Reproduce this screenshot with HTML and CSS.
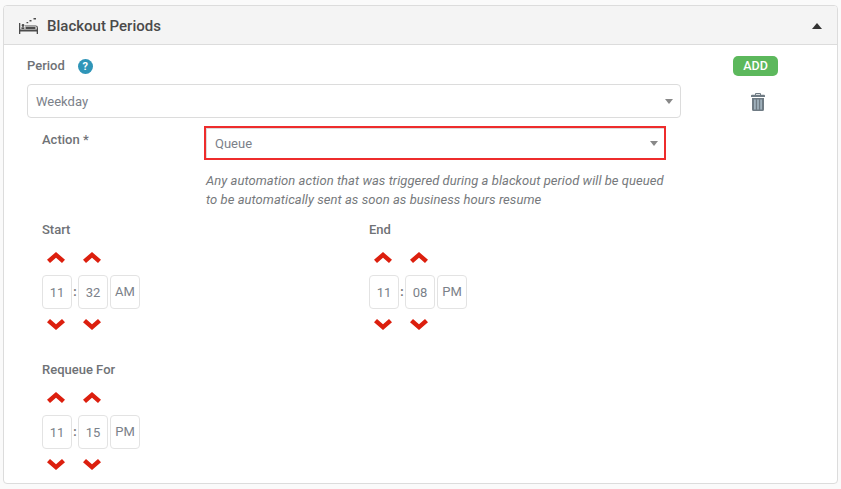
FILE: index.html
```html
<!DOCTYPE html>
<html lang="en">
<head>
<meta charset="utf-8">
<title>Blackout Periods</title>
<link rel="stylesheet" href="styles.css">
</head>
<body>
<svg class="defs" width="0" height="0" aria-hidden="true">
  <symbol id="up" viewBox="0 0 18 11"><path d="M0 7.800 9 0l9 7.800L15 11 9 5.800 3 11z"/></symbol>
  <symbol id="down" viewBox="0 0 18 11"><path d="M0 3.200 9 11l9-7.800L15 0 9 5.200 3 0z"/></symbol>
</svg>
<section class="panel">
  <header class="panel-head">
    <svg class="bed" viewBox="0 0 19 16" width="19" height="16"><path d="M0 5h1.300v6.500h16.400V9.500a1.300 1.300 0 0 0-1.300-1.300H6V7.500h10.600A2.400 2.400 0 0 1 19 9.900V16h-1.300v-2.500H1.300V16H0z"/><path d="M2.400 11V9.300h3V11zM6.500 11V8.800h10V11zM2.600 7.500a1.400 1.400 0 1 1 2.800 0 1.400 1.400 0 0 1-2.800 0z"/><path d="M7.500 4h1.700v1.300H7.500zM10.500 2h2v1.500h-2zM14.500 0H17v1.500h-2.500z"/></svg>
    <h2 class="panel-title">Blackout Periods</h2>
    <span class="caret-up"></span>
  </header>
  <div class="panel-body">
    <div class="period-row">
      <div class="period-main">
        <div class="label-row">
          <span class="label">Period</span>
          <span class="help">?</span>
        </div>
        <div class="select period-select"><span>Weekday</span><i class="caret"></i></div>
      </div>
      <div class="actions">
        <button class="add">ADD</button>
        <svg class="trash" viewBox="0 0 14 18" width="14" height="18"><path class="trash-body" fill-rule="evenodd" d="M5 0h4a1 1 0 0 1 1 1v.7h3a1 1 0 0 1 1 1V4H0V2.700a1 1 0 0 1 1-1h3V1a1 1 0 0 1 1-1zM5 1v.7h4V1zM1 5h12v11.500a1.500 1.500 0 0 1-1.500 1.500h-9A1.500 1.500 0 0 1 1 16.500z"/><path class="trash-bars" d="M3 6.500h1.800v10H3zM6.100 6.500h1.800v10H6.100zM9.200 6.500H11v10H9.200z"/></svg>
      </div>
    </div>
    <div class="action-row">
      <span class="label action-label">Action *</span>
      <div class="action-field">
        <div class="select queue-select"><span>Queue</span><i class="caret"></i></div>
        <p class="hint">Any automation action that was triggered during a blackout period will be queued<br>to be automatically sent as soon as business hours resume</p>
      </div>
    </div>
    <div class="times">
      <div class="time">
        <div class="label">Start</div>
        <div class="arrows"><svg class="chev"><use href="#up"/></svg><svg class="chev"><use href="#up"/></svg></div>
        <div class="fields"><span class="box">11</span><span class="colon">:</span><span class="box">32</span><span class="box ampm">AM</span></div>
        <div class="arrows lower"><svg class="chev"><use href="#down"/></svg><svg class="chev"><use href="#down"/></svg></div>
      </div>
      <div class="time">
        <div class="label">End</div>
        <div class="arrows"><svg class="chev"><use href="#up"/></svg><svg class="chev"><use href="#up"/></svg></div>
        <div class="fields"><span class="box">11</span><span class="colon">:</span><span class="box">08</span><span class="box ampm">PM</span></div>
        <div class="arrows lower"><svg class="chev"><use href="#down"/></svg><svg class="chev"><use href="#down"/></svg></div>
      </div>
      <div class="time">
        <div class="label">Requeue For</div>
        <div class="arrows"><svg class="chev"><use href="#up"/></svg><svg class="chev"><use href="#up"/></svg></div>
        <div class="fields"><span class="box">11</span><span class="colon">:</span><span class="box">15</span><span class="box ampm">PM</span></div>
        <div class="arrows lower"><svg class="chev"><use href="#down"/></svg><svg class="chev"><use href="#down"/></svg></div>
      </div>
    </div>
  </div>
</section>
</body>
</html>
```

FILE: styles.css
```css
* { box-sizing: border-box; }
html, body { height: 100%; }
body {
  margin: 0;
  padding: 5px 3px 0;
  background: #fafafa;
  font-family: Roboto, "Liberation Sans", sans-serif;
  font-size: 13px;
  color: #76838f;
  overflow: hidden;
}
.defs { position: absolute; }
.panel {
  width: 835px;
  height: 479px;
  background: #fff;
  border: 1px solid #dcdcdc;
  border-radius: 4px;
}
.panel-head {
  height: 39px;
  display: flex;
  align-items: center;
  padding: 1px 15px 0;
  background: #f4f4f4;
  border-bottom: 1px solid #dcdcdc;
  border-radius: 3px 3px 0 0;
}
.bed { fill: #4c4c4c; margin-right: 9px; }
.panel-title {
  margin: 0;
  flex: 1;
  font-size: 15px;
  font-weight: 500;
  color: #4a4a4a;
}
.caret-up {
  width: 0;
  height: 0;
  border-left: 5.500px solid transparent;
  border-right: 5.500px solid transparent;
  border-bottom: 6px solid #333;
}
.panel-body { padding: 12px 0 0 23px; }
.period-row { display: flex; }
.period-main { width: 654px; }
.label-row { display: flex; align-items: center; height: 18px; margin-bottom: 9px; }
.label { font-size: 13px; font-weight: 500; color: #6f7276; line-height: 18px; }
.help {
  margin-left: 13px;
  width: 15px;
  height: 15px;
  border-radius: 50%;
  background: #2f95b8;
  color: #fff;
  font-size: 11px;
  font-weight: 700;
  text-align: center;
  line-height: 15px;
}
.select {
  display: flex;
  align-items: center;
  justify-content: space-between;
  height: 34px;
  padding: 0 7px 0 8px;
  background: #fff;
  border: 1px solid #dcdcdc;
  border-radius: 4px;
  font-size: 13px;
  color: #7b8189;
}
.caret {
  width: 0;
  height: 0;
  border-left: 4px solid transparent;
  border-right: 4px solid transparent;
  border-top: 5px solid #888;
}
.actions {
  width: 45px;
  margin-left: 52px;
  display: flex;
  flex-direction: column;
  align-items: center;
}
.add {
  width: 45px;
  height: 20px;
  padding: 0;
  margin-top: -1px;
  border: 0;
  border-radius: 5px;
  background: #5cb85c;
  color: #fff;
  font: 500 12.500px/20px Roboto, sans-serif;
}
.trash { margin: 17px 0 0 5px; }
.trash-body { fill: #6f7b84; }
.trash-bars { fill: #9fb0bb; }
.action-row { display: flex; margin-top: 8px; padding-left: 15px; }
.action-label { width: 162px; margin-top: 5px; }
.action-field { width: 462px; }
.queue-select {
  border: 2px solid #ee2c2c;
  border-radius: 0;
  padding: 0 6px 0 9px;
  box-shadow: inset 1px 1px 0 #dcdcdc;
}
.hint {
  margin: 11px 0 0 2px;
  font-size: 13px;
  font-style: italic;
  letter-spacing: 0.05px;
  line-height: 19px;
  color: #76797c;
  white-space: nowrap;
}
.times {
  display: grid;
  grid-template-columns: 327px 327px;
  row-gap: 11px;
  margin-top: 12px;
  padding-left: 15px;
}
.time { height: 129px; }
.arrows { display: flex; gap: 18px; margin: 13px 0 0 5px; height: 11px; }
.arrows.lower { margin-top: 10px; }
.chev { width: 18px; height: 11px; fill: #dc1f0e; }
.fields { display: flex; align-items: center; margin-top: 12px; height: 34px; }
.box {
  width: 30px;
  height: 34px;
  border: 1px solid #e3e3e3;
  border-radius: 4px;
  text-align: center;
  font-size: 13px;
  line-height: 33px;
  color: #7b8189;
}
.colon { width: 6px; text-align: center; font-weight: 700; font-size: 12px; color: #76797c; }
.ampm { width: 30px; margin-left: 2px; line-height: 31px; }
```
